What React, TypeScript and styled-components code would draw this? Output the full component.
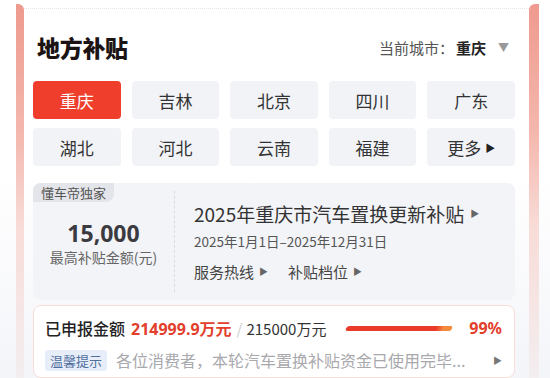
import styled, { createGlobalStyle } from "styled-components";

const GlobalStyle = createGlobalStyle`
  html, body {
    margin: 0;
    padding: 0;
    background: #ffffff;
  }
  body {
    font-family: "Noto Sans CJK SC", "Noto Sans", sans-serif;
  }
`;

const Page = styled.div`
  width: 550px;
  height: 378px;
  overflow: hidden;
  display: flex;
  align-items: stretch;
  padding-top: 4px;
  box-sizing: border-box;
  background: linear-gradient(180deg, #ffffff 0%, #ffffff 45%, #f4f5f9 100%);
`;

const SideBar = styled.div<{ $side: "left" | "right" }>`
  flex-shrink: 0;
  width: ${(p) => (p.$side === "left" ? "8px" : "10px")};
  margin-left: ${(p) => (p.$side === "left" ? "16px" : "0")};
  margin-right: ${(p) => (p.$side === "left" ? "0" : "11px")};
  border-radius: ${(p) => (p.$side === "left" ? "0 6px 0 0" : "6px 0 0 0")};
  background: linear-gradient(180deg, #ef9a8e 0%, #f4b8ae 35%, #f8dcd8 60%, #f3eef0 100%);
`;

const Content = styled.div`
  flex: 1;
  display: flex;
  flex-direction: column;
  padding: 0 14px 0 9px;
  margin-top: 4px;
  border-top: 1px dotted #e6e6e6;
`;

const Header = styled.div`
  display: flex;
  align-items: center;
  justify-content: space-between;
  height: 36px;
  margin-top: 20px;
  padding: 0 6px 0 4px;
`;

const Title = styled.h1`
  margin: 0;
  font-size: 23px;
  font-weight: 900;
  color: #1c1414;
  letter-spacing: -0.3px;
`;

const CityPicker = styled.div`
  display: flex;
  align-items: center;
  gap: 2px;
  font-size: 15px;
  color: #555;
`;

const CityName = styled.span`
  color: #222;
  font-weight: 600;
`;

const Caret = styled.span`
  color: #999;
  font-size: 11px;
  margin-left: 10px;
`;

const Grid = styled.div`
  display: grid;
  grid-template-columns: repeat(5, 1fr);
  gap: 9px 11px;
  margin-top: 16px;
`;

const CityButton = styled.div<{ $active?: boolean }>`
  height: 38px;
  display: flex;
  align-items: center;
  justify-content: center;
  gap: 4px;
  border-radius: 4px;
  font-size: 17px;
  background: ${(p) => (p.$active ? "#ef3e2c" : "#f2f3f7")};
  color: ${(p) => (p.$active ? "#ffffff" : "#333")};
`;

const SmallTri = styled.span`
  font-size: 10px;
  color: #222;
`;

const InfoCard = styled.div`
  position: relative;
  margin-top: 17px;
  height: 117px;
  border-radius: 8px;
  background: #f3f4f8;
  display: grid;
  grid-template-columns: 142px 1fr;
`;

const Exclusive = styled.div`
  position: absolute;
  left: 0;
  top: 0;
  padding: 0 8px;
  height: 19px;
  line-height: 19px;
  font-size: 13px;
  color: #555;
  background: #e4e5ea;
  border-radius: 8px 0 8px 0;
`;

const Amount = styled.div`
  display: flex;
  flex-direction: column;
  align-items: center;
  justify-content: center;
  padding-top: 4px;
  border-right: 1px dashed #dadbe0;
  margin: 8px 0;
`;

const Big = styled.div`
  font-family: "Noto Sans", sans-serif;
  font-size: 23px;
  font-weight: 700;
  color: #3a3a40;
  line-height: 27px;
`;

const Caption = styled.div`
  font-size: 14px;
  color: #666;
  line-height: 20px;
`;

const Policy = styled.div`
  display: flex;
  flex-direction: column;
  padding: 17px 0 0 19px;
`;

const PolicyTitle = styled.div`
  font-size: 19px;
  color: #333;
  display: flex;
  align-items: center;
  gap: 6px;
  height: 26px;
`;

const Dates = styled.div`
  font-size: 13.5px;
  color: #555;
  margin-top: 4px;
  height: 22px;
  display: flex;
  align-items: center;
`;

const Links = styled.div`
  display: flex;
  gap: 20px;
  margin-top: 9px;
  font-size: 15px;
  color: #444;
`;

const Link = styled.span`
  display: flex;
  align-items: center;
  gap: 5px;
`;

const Arrow = styled.span<{ $c?: string }>`
  font-size: 9px;
  color: ${(p) => p.$c || "#666"};
`;

const ProgressCard = styled.div`
  margin-top: 5px;
  background: #ffffff;
  border: 1px solid #f8ddd8;
  border-radius: 8px;
  padding: 11px 12px 0 11px;
  flex: 1;
  display: flex;
  flex-direction: column;
  gap: 9px;
`;

const ProgressRow = styled.div`
  display: flex;
  align-items: center;
  height: 22px;
`;

const Label = styled.span`
  font-size: 16px;
  color: #222;
  font-weight: 500;
`;

const Applied = styled.span`
  font-family: "Noto Sans", "Noto Sans CJK SC", sans-serif;
  font-size: 16px;
  font-weight: 700;
  color: #e2402c;
  margin-left: 6px;
`;

const Total = styled.span`
  font-size: 15px;
  color: #333;
  margin-left: 5px;
`;

const Slash = styled.span`
  color: #ccc;
  margin-right: 4px;
`;

const Bar = styled.div`
  margin-left: auto;
  width: 106px;
  height: 5px;
  border-radius: 3px;
  background: linear-gradient(90deg, #ea3b2a 0%, #ea3b2a 85%, #f48a3c 92%);
  transform: skewX(-20deg);
`;

const Percent = styled.span`
  font-family: "Noto Sans", sans-serif;
  font-size: 16px;
  font-weight: 700;
  color: #e2402c;
  margin-left: 10px;
  width: 40px;
  text-align: right;
`;

const TipRow = styled.div`
  display: flex;
  align-items: center;
  gap: 9px;
`;

const TipTag = styled.span`
  background: #e8eef9;
  color: #4f6f9f;
  font-size: 13px;
  padding: 0 5px;
  height: 21px;
  line-height: 21px;
  border-radius: 3px;
`;

const TipText = styled.span`
  flex: 1;
  color: #a8a8ad;
  font-size: 16px;
  white-space: nowrap;
  overflow: hidden;
`;

const cities = ["重庆", "吉林", "北京", "四川", "广东", "湖北", "河北", "云南", "福建"];

export default function App() {
  return (
    <Page>
      <GlobalStyle />
      <SideBar $side="left" />
      <Content>
        <Header>
          <Title>地方补贴</Title>
          <CityPicker>
            <span>当前城市：</span>
            <CityName>重庆</CityName>
            <Caret>▼</Caret>
          </CityPicker>
        </Header>
        <Grid>
          {cities.map((c, i) => (
            <CityButton key={c} $active={i === 0}>
              {c}
            </CityButton>
          ))}
          <CityButton>
            更多<SmallTri>▶</SmallTri>
          </CityButton>
        </Grid>
        <InfoCard>
          <Exclusive>懂车帝独家</Exclusive>
          <Amount>
            <Big>15,000</Big>
            <Caption>最高补贴金额(元)</Caption>
          </Amount>
          <Policy>
            <PolicyTitle>
              2025年重庆市汽车置换更新补贴<Arrow>▶</Arrow>
            </PolicyTitle>
            <Dates>2025年1月1日–2025年12月31日</Dates>
            <Links>
              <Link>
                服务热线<Arrow>▶</Arrow>
              </Link>
              <Link>
                补贴档位<Arrow>▶</Arrow>
              </Link>
            </Links>
          </Policy>
        </InfoCard>
        <ProgressCard>
          <ProgressRow>
            <Label>已申报金额</Label>
            <Applied>214999.9万元</Applied>
            <Total>
              <Slash>/</Slash>215000万元
            </Total>
            <Bar />
            <Percent>99%</Percent>
          </ProgressRow>
          <TipRow>
            <TipTag>温馨提示</TipTag>
            <TipText>各位消费者，本轮汽车置换补贴资金已使用完毕...</TipText>
            <Arrow $c="#777">▶</Arrow>
          </TipRow>
        </ProgressCard>
      </Content>
      <SideBar $side="right" />
    </Page>
  );
}
